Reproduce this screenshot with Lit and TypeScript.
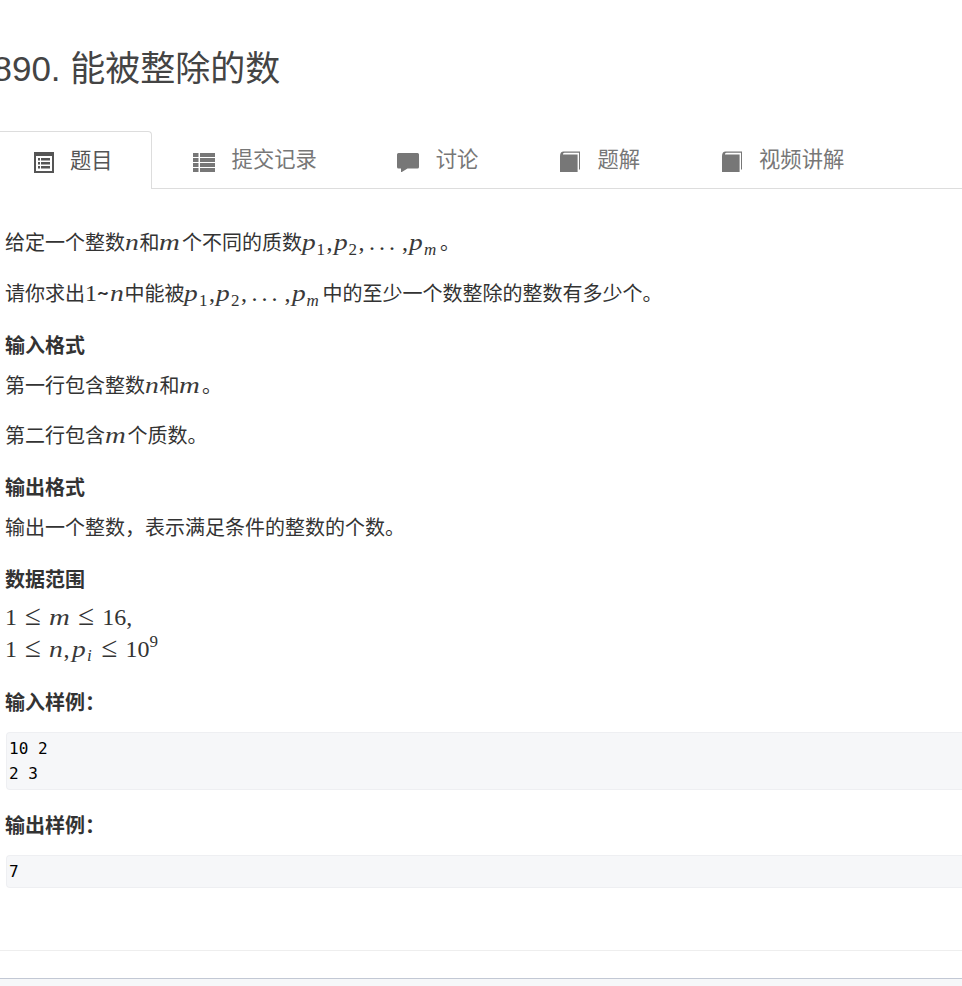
import { LitElement, html, css } from "lit";
import { customElement } from "lit/decorators.js";

const book = html`<svg class="ic" viewBox="0 0 20 21"><path d="M0 5C0 2 1.5 .6 3.5 .6H20v18h-1V1.8H4.5C3.4 1.8 3 2.6 3 3.4H17.6V21H0z" fill="currentColor"/></svg>`;
const i = (t: string, w = "") => html`<span class="mi ${w}"><span class="g">${t}</span></span>`;
const r = (t: string) => html`<span class="mr">${t}</span>`;
const le = html`<span class="le">≤</span>`;
const p = (s: string) => html`${i("p", "wp")}<sub class="${s === "m" ? "si" : "sn"}">${s}</sub>`;
const seq = html`${p("1")}<span class="mr punct">,</span>${p("2")}<span class="mr punct">,</span><span class="mr dots">...</span><span class="mr punct">,</span>${p("m")}`;

@customElement("app-root")
export class AppRoot extends LitElement {
  static styles = css`
    :host { display: block; height: 986px; overflow: hidden; background: #fff; color: #333;
      font-family: "Noto Sans CJK SC", "Liberation Sans", sans-serif; }
    h1 { margin: 0 0 0 -27px; padding-top: 43px; height: 89px; box-sizing: border-box; font-size: 35px; line-height: 52px; font-weight: 400; color: #444; font-family: "Liberation Sans", "Noto Sans CJK SC", sans-serif; white-space: nowrap; }
    .tabs { display: flex; height: 58px; border-bottom: 1px solid #ddd; margin: 42px 0 0 -7px; box-sizing: border-box; }
    .tab { display: flex; align-items: center; gap: 17px; padding: 0 41px; color: #777; font-size: 21.3px; white-space: nowrap; height: 57px; box-sizing: border-box; }
    .tab span { margin-bottom: 4px; }
    .tab.narrow { padding-right: 39px; }
    .tab.active { color: #555; border: 1px solid #ddd; border-bottom: 0; border-radius: 4px 4px 0 0; height: 58px; background: #fff; padding: 0 38px 0 40px; gap: 16px; }
    .ic { width: 20px; height: 21px; flex: none; margin-top: 4px; }
    .ic.w22 { width: 22px; }
    .content { padding: 0 0 0 5px; font-size: 20px; line-height: 28px; }
    p { margin: 0; white-space: nowrap; }
    .p1 { margin-top: 39px; height: 28px; }
    .p2 { margin-top: 23px; height: 28px; }
    .h { font-weight: 700; height: 28px; }
    .mi { font-family: "Liberation Serif", serif; font-style: italic; font-size: 24px; display: inline-block; line-height: 20px; color: #3a3a3a; }
    .g { display: inline-block; transform-origin: left center; }
    .wn { width: 14.4px; } .wn .g { transform: scaleX(1.15); }
    .wm { width: 22.6px; } .wm .g { transform: scaleX(1.2); }
    .wp { width: 14.5px; } .wp .g { transform: scaleX(1.14); }
    .mr { font-family: "Liberation Serif", serif; font-size: 24px; display: inline-block; line-height: 20px; }
    sub { font-family: "Liberation Serif", serif; font-size: 17px; line-height: 0; vertical-align: -5px; display: inline-block; }
    sub.sn { width: 10px; }
    sub.si { font-style: italic; width: 16px; }
    .punct { width: 7.5px; }
    .dots { width: 36px; letter-spacing: 4px; padding-left: 3px; box-sizing: border-box; }
    .tilde { display: inline-block; width: 13px; font-weight: 700; }
    .le { font-family: "Liberation Serif", serif; font-size: 29px; line-height: 20px; display: inline-block; width: 18.7px; text-align: center; margin: 0 6.7px; }
    .mathblock { height: 32px; line-height: 32px; }
    .mathblock .wm { width: 21px; }
    .mathblock .wc { width: 9px; }
    .mathblock sub.si { width: 6.5px; }
    .mathblock .mi, .mathblock .mr, .mathblock .le { position: relative; top: 1px; }
    sup { font-family: "Liberation Serif", serif; font-size: 17px; line-height: 0; vertical-align: 9px; }
    pre { margin: 0 0 0 1px; background: #f6f7f9; border: 1px solid #eeeff2; border-right: 0; border-radius: 4px 0 0 4px; font-family: "DejaVu Sans Mono", monospace; font-size: 16px; color: #000; padding: 3px 2px; line-height: 25px; }
    .rule { border-top: 1px solid #eee; margin: 62px 0 0 -5px; height: 27px; }
    .foot { border-top: 1px solid #c2c8d4; background: #f6f7f9; height: 8px; }
    .mt24 { margin-top: 24px; } .mt12 { margin-top: 12px; } .mt22 { margin-top: 22px; }
    .mt7 { margin-top: 7px; } .mt21 { margin-top: 21px; } .mt16 { margin-top: 16px; }
  `;

  render() {
    return html`
      <h1>3890. 能被整除的数</h1>
      <div class="tabs">
        <div class="tab active"><svg class="ic" viewBox="0 0 20 21"><path fill-rule="evenodd" fill="currentColor" d="M0 0h20v21H0zM2 4v15h16V4zM4 6h2v2.5H4zM7 6h9v2.5H7zM4 10h2v2.5H4zM7 10h9v2.5H7zM4 14h2v2.5H4zM7 14h9v2.5H7z"/></svg><span>题目</span></div>
        <div class="tab narrow"><svg class="ic w22" viewBox="0 0 22 21"><path fill="currentColor" d="M0 2h5.5v4H0zM7 2h15v4H7zM0 7h5.5v4H0zM7 7h15v4H7zM0 12h5.5v4H0zM7 12h15v4H7zM0 17h5.5v4H0zM7 17h15v4H7z"/></svg><span>提交记录</span></div>
        <div class="tab"><svg class="ic w22" viewBox="0 0 22 21"><path fill="currentColor" d="M1.5 2h19A1.5 1.5 0 0 1 22 3.500v12.500A1.500 1.500 0 0 1 20.500 17.500H10.500L4 21.500V17.500H1.500A1.500 1.500 0 0 1 0 16V3.500A1.500 1.500 0 0 1 1.500 2z"/></svg><span>讨论</span></div>
        <div class="tab">${book}<span>题解</span></div>
        <div class="tab">${book}<span>视频讲解</span></div>
      </div>
      <div class="content">
        <p class="p1">给定一个整数${i("n", "wn")}和${i("m", "wm")}个不同的质数${seq}。</p>
        <p class="p2">请你求出${r("1")}<span class="tilde">~</span>${i("n", "wn")}中能被${seq}中的至少一个数整除的整数有多少个。</p>
        <p class="h mt24">输入格式</p>
        <p class="mt12">第一行包含整数${i("n", "wn")}和${i("m", "wm")}。</p>
        <p class="mt22">第二行包含${i("m", "wm")}个质数。</p>
        <p class="h mt24">输出格式</p>
        <p class="mt12">输出一个整数，表示满足条件的整数的个数。</p>
        <p class="h mt24">数据范围</p>
        <p class="mathblock mt7">${r("1")}${le}${i("m", "wm")}${le}${r("16")}<span class="mr">,</span></p>
        <p class="mathblock">${r("1")}${le}${i("n", "wn")}<span class="mr wc">,</span>${i("p", "wp")}<sub class="si">i</sub>${le}${r("10")}<sup>9</sup></p>
        <p class="h mt24">输入样例：</p>
        <pre class="mt16">10 2
2 3</pre>
        <p class="h mt21">输出样例：</p>
        <pre class="mt16">7</pre>
        <div class="rule"></div>
      </div>
      <div class="foot"></div>
    `;
  }
}
